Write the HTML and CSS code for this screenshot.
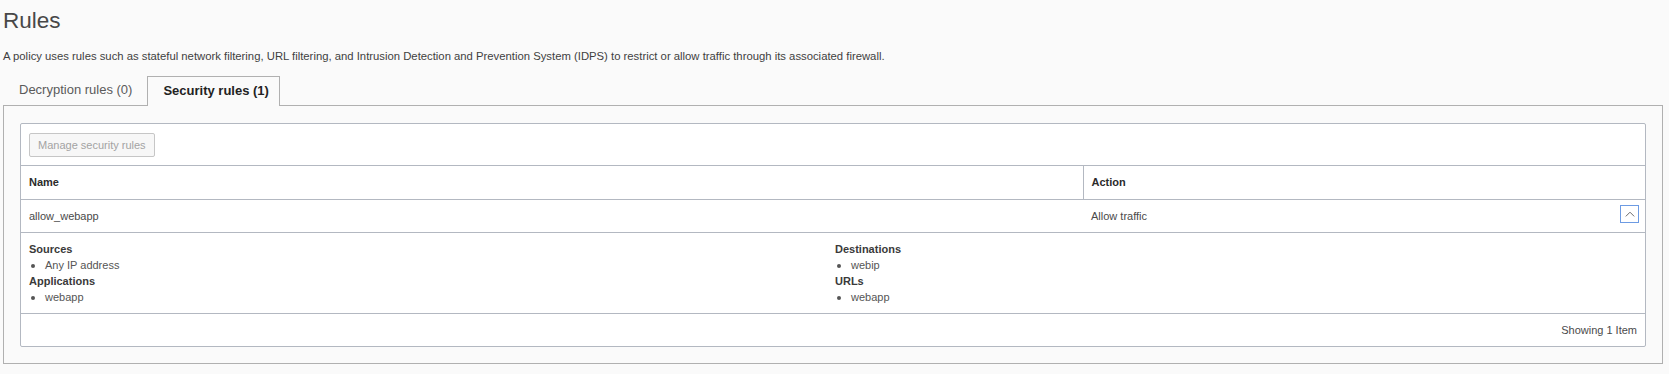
FILE: index.html
```html
<!DOCTYPE html>
<html lang="en">
<head>
<meta charset="utf-8">
<title>Rules</title>
<link rel="stylesheet" href="styles.css">
</head>
<body>
<div class="page">
  <h1 class="title">Rules</h1>
  <p class="desc">A policy uses rules such as stateful network filtering, URL filtering, and Intrusion Detection and Prevention System (IDPS) to restrict or allow traffic through its associated firewall.</p>
  <div class="tabs">
    <div class="tab">Decryption rules (0)</div>
    <div class="tab tab-active">Security rules (1)</div>
  </div>
  <div class="tab-panel">
    <div class="table-box">
      <div class="toolbar">
        <button class="btn" disabled>Manage security rules</button>
      </div>
      <table class="grid">
        <thead>
          <tr>
            <th class="col-name">Name</th>
            <th class="col-action">Action</th>
          </tr>
        </thead>
        <tbody>
          <tr class="row">
            <td class="col-name">allow_webapp</td>
            <td class="col-action">
              <div class="action-cell">
                <span>Allow traffic</span>
                <span class="expander">
                  <svg width="10" height="6" viewBox="0 0 10 6"><path d="M0.8 5.4 L5 1.2 L9.2 5.4" fill="none" stroke="#6b6b6b" stroke-width="1"/></svg>
                </span>
              </div>
            </td>
          </tr>
          <tr class="detail">
            <td colspan="2">
              <div class="detail-grid">
                <div class="detail-col">
                  <div class="d-label">Sources</div>
                  <ul class="d-list"><li>Any IP address</li></ul>
                  <div class="d-label">Applications</div>
                  <ul class="d-list"><li>webapp</li></ul>
                </div>
                <div class="detail-col">
                  <div class="d-label">Destinations</div>
                  <ul class="d-list"><li>webip</li></ul>
                  <div class="d-label">URLs</div>
                  <ul class="d-list"><li>webapp</li></ul>
                </div>
              </div>
            </td>
          </tr>
        </tbody>
      </table>
      <div class="footer">Showing 1 Item</div>
    </div>
  </div>
</div>
</body>
</html>
```
FILE: styles.css
```css
* { box-sizing: border-box; }
html, body {
  margin: 0;
  padding: 0;
  background: #fafafa;
}
body {
  font-family: "Liberation Sans", Arial, sans-serif;
  color: #4a4a4a;
}
.page {
  padding: 0 6px 0 3px;
}
.title {
  margin: 0;
  padding-top: 7px;
  font-size: 22.5px;
  line-height: 28px;
  font-weight: normal;
  color: #484848;
}
.desc {
  margin: 14px 0 0 0;
  font-size: 11.3px;
  line-height: 14px;
  color: #3f3f3f;
}
.tabs {
  display: flex;
  margin-top: 13px;
  height: 29px;
  align-items: flex-end;
}
.tab {
  height: 29px;
  padding: 0 15px 0 16px;
  font-size: 13px;
  line-height: 28px;
  color: #5a5a5a;
}
.tab-active {
  background: #fafafa;
  border: 1px solid #b0b0b0;
  border-bottom: none;
  color: #222;
  font-weight: bold;
  padding: 0 10px 0 15px;
  position: relative;
  margin-bottom: -1px;
  height: 30px;
  z-index: 1;
}
.tab-panel {
  border: 1px solid #b0b0b0;
  padding: 17px 16px 16px 16px;
  height: 259px;
}
.table-box {
  background: #fff;
  border: 1px solid #b3b8c1;
  border-radius: 2px;
}
.toolbar {
  height: 42px;
  padding: 9px 8px;
  border-bottom: 1px solid #b3b8c1;
}
.btn {
  height: 24px;
  padding: 0 8px;
  font-family: "Liberation Sans", Arial, sans-serif;
  font-size: 11px;
  color: #a3a3a3;
  background: #f7f7f7;
  border: 1px solid #c6c6c6;
  border-radius: 2px;
}
.grid {
  width: 100%;
  border-collapse: collapse;
  font-size: 11px;
}
.grid th {
  text-align: left;
  font-weight: bold;
  color: #2b2b2b;
  height: 33px;
  padding: 0 8px;
  border-bottom: 1px solid #b3b8c1;
}
.grid th.col-name {
  width: 1062px;
  border-right: 1px solid #b3b8c1;
}
.grid td {
  height: 33px;
  padding: 0 8px;
  color: #4a4a4a;
  border-bottom: 1px solid #b3b8c1;
}
.action-cell {
  display: flex;
  align-items: center;
  justify-content: space-between;
}
.expander {
  width: 19px;
  height: 18px;
  border: 1.5px solid #6d9be3;
  display: flex;
  align-items: center;
  justify-content: center;
  margin-top: -3px;
  margin-right: -2px;
}
.grid tr.detail td {
  height: auto;
  padding: 8px 8px 8px 8px;
}
.detail-grid {
  display: grid;
  grid-template-columns: 806px 1fr;
}
.d-label {
  font-weight: bold;
  color: #3a3a3a;
  line-height: 16px;
}
.d-list {
  margin: 0;
  padding: 0;
  list-style: none;
}
.d-list li {
  position: relative;
  padding-left: 16px;
  line-height: 16px;
  color: #555;
}
.d-list li::before {
  content: "";
  position: absolute;
  left: 2px;
  top: 7px;
  width: 4px;
  height: 4px;
  border-radius: 50%;
  background: #555;
}
.footer {
  height: 32px;
  padding: 0 8px;
  display: flex;
  align-items: center;
  justify-content: flex-end;
  font-size: 11px;
  color: #4a4a4a;
}
```
